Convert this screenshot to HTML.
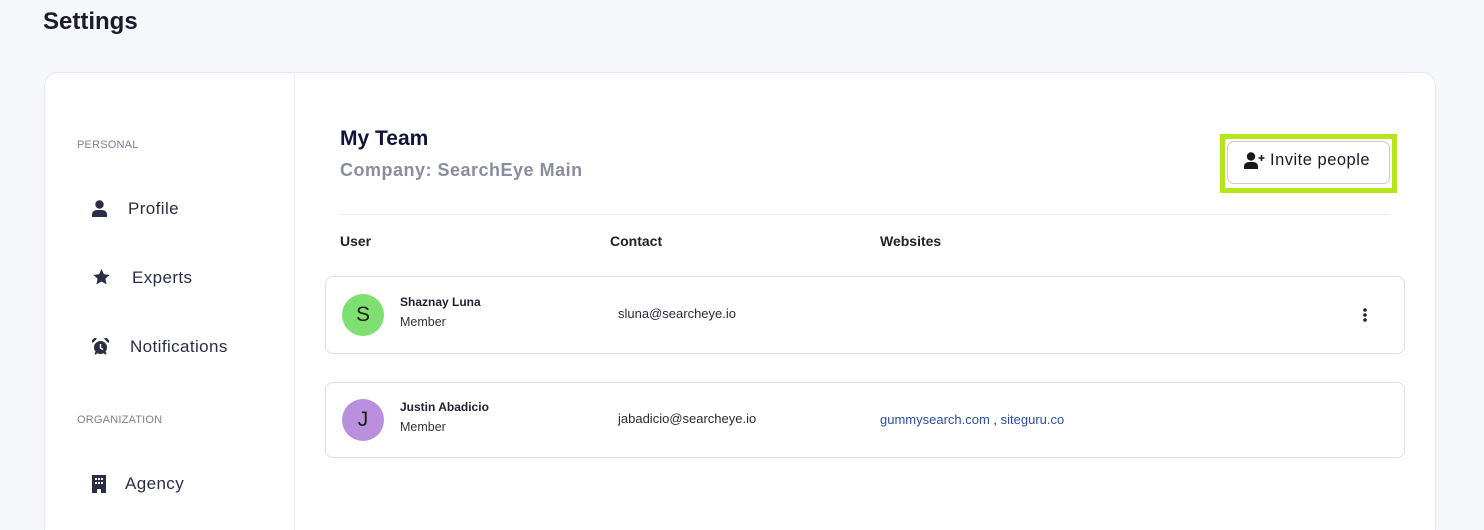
<!DOCTYPE html>
<html><head><style>
*{margin:0;padding:0;box-sizing:border-box}
html,body{width:1484px;height:530px;overflow:hidden}
body{background:#f6f7fb;font-family:"Liberation Sans",sans-serif;color:#1f2030;position:relative}
.a{position:absolute}
h1{position:absolute;left:43px;top:8px;font-size:24px;font-weight:bold;color:#1b1c2a}
.card{left:44px;top:72px;width:1392px;height:470px;background:#fff;border:1px solid #e6e7ee;border-radius:14px}
.side{left:294px;top:72px;width:1px;height:458px;background:#ececf2}
.sec{font-size:11px;color:#7a7f95;left:77px;letter-spacing:.2px}
.nav{font-size:17px;color:#2a2d45;letter-spacing:.4px}
.row{left:325px;width:1080px;border:1px solid #e0e1e8;border-radius:8px;background:#fff}
.av{width:42px;height:42px;border-radius:50%;font-size:21px;text-align:center;line-height:42px;color:#1a1a1a}
.nm{font-size:12px;font-weight:bold}
.mb{font-size:12.5px;color:#333}
.em{font-size:13px;color:#2a2a3a}
.th{font-size:14px;font-weight:bold;top:233px;color:#222}
a{color:#2a4fa8;text-decoration:none}
</style></head><body>
<h1>Settings</h1>
<div class="a card"></div>
<div class="a side"></div>
<div class="a sec" style="top:139px">PERSONAL</div>
<div class="a sec" style="top:414px">ORGANIZATION</div>
<svg class="a" style="left:92px;top:200px" width="15" height="17" viewBox="0 0 15 17"><circle cx="7.5" cy="4.5" r="4.2" fill="#2a2d45"/><path d="M0 17v-2.5C0 11.5 2.5 10 5 10h5c2.5 0 5 1.5 5 4.5V17z" fill="#2a2d45"/></svg>
<div class="a nav" style="left:128px;top:199px">Profile</div>
<svg class="a" style="left:93px;top:269px" width="17" height="16" viewBox="0 0 24 23"><path d="M12 0l3.5 7.5 8.2.9-6.1 5.6 1.7 8.1L12 18l-7.3 4.1 1.7-8.1L.3 8.4l8.2-.9z" fill="#2a2d45"/></svg>
<div class="a nav" style="left:132px;top:268px">Experts</div>
<svg class="a" style="left:92px;top:338px" width="17" height="17" viewBox="0 0 17 17"><circle cx="8.5" cy="9.5" r="6.5" fill="#2a2d45"/><path d="M8.5 6v4l2.5 1.5" stroke="#fff" stroke-width="1.5" fill="none"/><path d="M0 4l4-4M17 4l-4-4" stroke="#2a2d45" stroke-width="2.4"/><path d="M3 16l2-2M14 16l-2-2" stroke="#2a2d45" stroke-width="2"/></svg>
<div class="a nav" style="left:130px;top:337px">Notifications</div>
<svg class="a" style="left:92px;top:475px" width="14" height="18" viewBox="0 0 14 18"><path d="M0 0h14v18H9v-4H5v4H0z" fill="#2a2d45"/><g fill="#fff"><rect x="3" y="3" width="2" height="2"/><rect x="6" y="3" width="2" height="2"/><rect x="9" y="3" width="2" height="2"/><rect x="3" y="7" width="2" height="2"/><rect x="6" y="7" width="2" height="2"/><rect x="9" y="7" width="2" height="2"/></g></svg>
<div class="a nav" style="left:125px;top:474px">Agency</div>

<div class="a" style="left:340px;top:127px;font-size:21px;font-weight:bold;color:#12133a">My Team</div>
<div class="a" style="left:340px;top:160px;font-size:18px;font-weight:bold;color:#8a8ca0;letter-spacing:.5px">Company: SearchEye Main</div>
<div class="a" style="left:1220px;top:134px;width:177px;height:59px;border:5px solid #b5e61d"></div>
<div class="a" style="left:1227px;top:141px;width:163px;height:43px;border:1px solid #c8c9d2;border-radius:7px;background:#fff"></div>
<svg class="a" style="left:1244px;top:152px" width="21" height="17" viewBox="0 0 21 17"><circle cx="7" cy="4.5" r="4.2" fill="#1a1a1a"/><path d="M0 17v-2.5C0 11.5 2.5 10 5 10h4c2.5 0 5 1.5 5 4.5V17z" fill="#1a1a1a"/><path d="M17.5 3v6M14.5 6h6" stroke="#1a1a1a" stroke-width="1.6"/></svg>
<div class="a" style="left:1270px;top:151px;font-size:16.5px;color:#1a1a2e;letter-spacing:.5px">Invite people</div>
<div class="a" style="left:340px;top:214px;width:1050px;height:1px;background:#ececf0"></div>
<div class="a th" style="left:340px">User</div>
<div class="a th" style="left:610px">Contact</div>
<div class="a th" style="left:880px">Websites</div>

<div class="a row" style="top:276px;height:78px"></div>
<div class="a av" style="left:342px;top:294px;background:#7ee070">S</div>
<div class="a nm" style="left:400px;top:295px">Shaznay Luna</div>
<div class="a mb" style="left:400px;top:315px">Member</div>
<div class="a em" style="left:618px;top:306px">sluna@searcheye.io</div>
<svg class="a" style="left:1362px;top:307px" width="6" height="16"><circle cx="3" cy="3" r="1.8" fill="#222"/><circle cx="3" cy="8" r="1.8" fill="#222"/><circle cx="3" cy="13" r="1.8" fill="#222"/></svg>

<div class="a row" style="top:382px;height:76px"></div>
<div class="a av" style="left:342px;top:399px;background:#b98fde">J</div>
<div class="a nm" style="left:400px;top:400px">Justin Abadicio</div>
<div class="a mb" style="left:400px;top:420px">Member</div>
<div class="a em" style="left:618px;top:411px">jabadicio@searcheye.io</div>
<div class="a em" style="left:880px;top:412px"><a>gummysearch.com</a> , <a>siteguru.co</a></div>
</body></html>
